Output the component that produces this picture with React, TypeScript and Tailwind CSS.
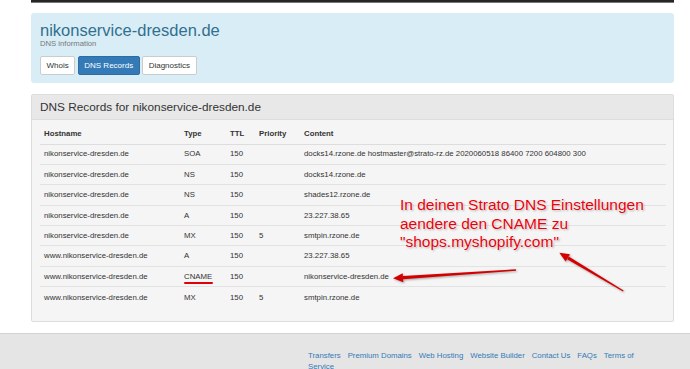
import React from "react";

const rows: [string, string, string, string, string][] = [
  ["nikonservice-dresden.de", "SOA", "150", "", "docks14.rzone.de hostmaster@strato-rz.de 2020060518 86400 7200 604800 300"],
  ["nikonservice-dresden.de", "NS", "150", "", "docks14.rzone.de"],
  ["nikonservice-dresden.de", "NS", "150", "", "shades12.rzone.de"],
  ["nikonservice-dresden.de", "A", "150", "", "23.227.38.65"],
  ["nikonservice-dresden.de", "MX", "150", "5", "smtpin.rzone.de"],
  ["www.nikonservice-dresden.de", "A", "150", "", "23.227.38.65"],
  ["www.nikonservice-dresden.de", "CNAME", "150", "", "nikonservice-dresden.de"],
  ["www.nikonservice-dresden.de", "MX", "150", "5", "smtpin.rzone.de"],
];

const links = ["Transfers", "Premium Domains", "Web Hosting", "Website Builder", "Contact Us", "FAQs", "Terms of Service"];

export default function App() {
  return (
    <div className="relative min-h-[369px] bg-white font-['Liberation_Sans',Arial,sans-serif] text-[#333] overflow-hidden">
      {/* top navbar remnant */}
      <div className="ml-[31px] w-[643px]">
        <div className="h-[2px] bg-[#262626]" />
        <div className="h-[1px] bg-[#777]" />
      </div>

      {/* jumbotron */}
      <div className="ml-[31px] mt-[10px] w-[643px] h-[70px] rounded-[3px] bg-[#d9edf7] px-[9px] pt-[8px]">
        <div className="h-[18px] leading-[18px] text-[16.5px] text-[#31708f]">nikonservice-dresden.de</div>
        <div className="h-[9px] leading-[9px] text-[7.7px] text-[#777]">DNS information</div>
        <div className="mt-[8px] flex gap-[2.5px]">
          <div className="h-[19px] px-[5.5px] flex items-center rounded-[2px] border border-[#ccc] bg-white text-[8px] text-[#333]">Whois</div>
          <div className="h-[19px] px-[5.5px] flex items-center rounded-[2px] border border-[#2e6da4] bg-[#337ab7] text-[8px] text-white">DNS Records</div>
          <div className="h-[19px] px-[5.5px] flex items-center rounded-[2px] border border-[#ccc] bg-white text-[8px] text-[#333]">Diagnostics</div>
        </div>
      </div>

      {/* panel */}
      <div className="ml-[31px] mt-[11px] w-[643px] rounded-[2px] border border-[#dddddd] bg-[#f5f5f5]">
        <div className="h-[25px] flex items-center px-[8px] bg-[#e8e8e8] border-b border-[#dddddd] text-[11.8px] leading-none pt-[1px]">
          DNS Records for nikonservice-dresden.de
        </div>
        <div className="px-[8px] pt-[4px] pb-[13px] text-[7.8px]">
          <div className="w-[626px]">
            <div className="grid grid-cols-[140px_46px_29px_45px_1fr] h-[20.5px] items-center border-b border-[#dddddd] font-bold">
              <div className="px-[4px]">Hostname</div>
              <div className="px-[4px]">Type</div>
              <div className="px-[4px]">TTL</div>
              <div className="px-[4px]">Priority</div>
              <div className="px-[4px]">Content</div>
            </div>
            {rows.map((r, i) => (
              <div
                key={i}
                className={
                  "grid grid-cols-[140px_46px_29px_45px_1fr] h-[20.4px] items-center " +
                  (i < rows.length - 1 ? "border-b border-[#e2e2e2]" : "")
                }
              >
                <div className="px-[4px] whitespace-nowrap">{r[0]}</div>
                <div className="px-[4px]">
                  {r[1] === "CNAME" ? (
                    <span className="relative">
                      CNAME
                      <span className="absolute left-0 top-[10px] w-[29px] h-[2.5px] rounded-full bg-[#e0000a]" />
                    </span>
                  ) : (
                    r[1]
                  )}
                </div>
                <div className="px-[4px]">{r[2]}</div>
                <div className="px-[4px]">{r[3]}</div>
                <div className="px-[4px] whitespace-nowrap">{r[4]}</div>
              </div>
            ))}
          </div>
        </div>
      </div>

      {/* footer */}
      <div className="mt-[11px] border-t border-[#d2d2d2] bg-[#e5e5e5] pt-[16px] pb-[4px]">
        <div className="ml-[308px] w-[340px] text-[7.8px] leading-[11px] text-[#337ab7]">
          {links.map((l) => (
            <span key={l} className="mr-[7px]">{l}</span>
          ))}
        </div>
      </div>

      {/* annotation overlay */}
      <div className="absolute left-[400px] top-[196px] text-[15.5px] leading-[18.5px] text-[#e8000b] whitespace-nowrap [text-shadow:0_0_1.5px_#fff,0_0_2px_#fff,1px_1px_2px_rgba(0,0,0,0.35)]">
        <div>In deinen Strato DNS Einstellungen</div>
        <div>aendere den CNAME zu</div>
        <div>"shops.myshopify.com"</div>
      </div>
      <svg
        className="absolute left-0 top-0 pointer-events-none [filter:drop-shadow(1px_1px_1px_rgba(0,0,0,0.35))]"
        width="690"
        height="369"
        viewBox="0 0 690 369"
      >
        <polygon points="516,270.7 516,269.3 403,275.9 403,279.3" fill="#d40000" />
        <polygon points="393,278.3 403.3,282.2 402.7,273.3" fill="#d40000" />
        <polygon points="623.6,290.5 623,291.5 567.1,259.2 568.7,256.4" fill="#d40000" />
        <polygon points="559.3,252.7 570,254.2 565.6,261.4" fill="#d40000" />
      </svg>
    </div>
  );
}
